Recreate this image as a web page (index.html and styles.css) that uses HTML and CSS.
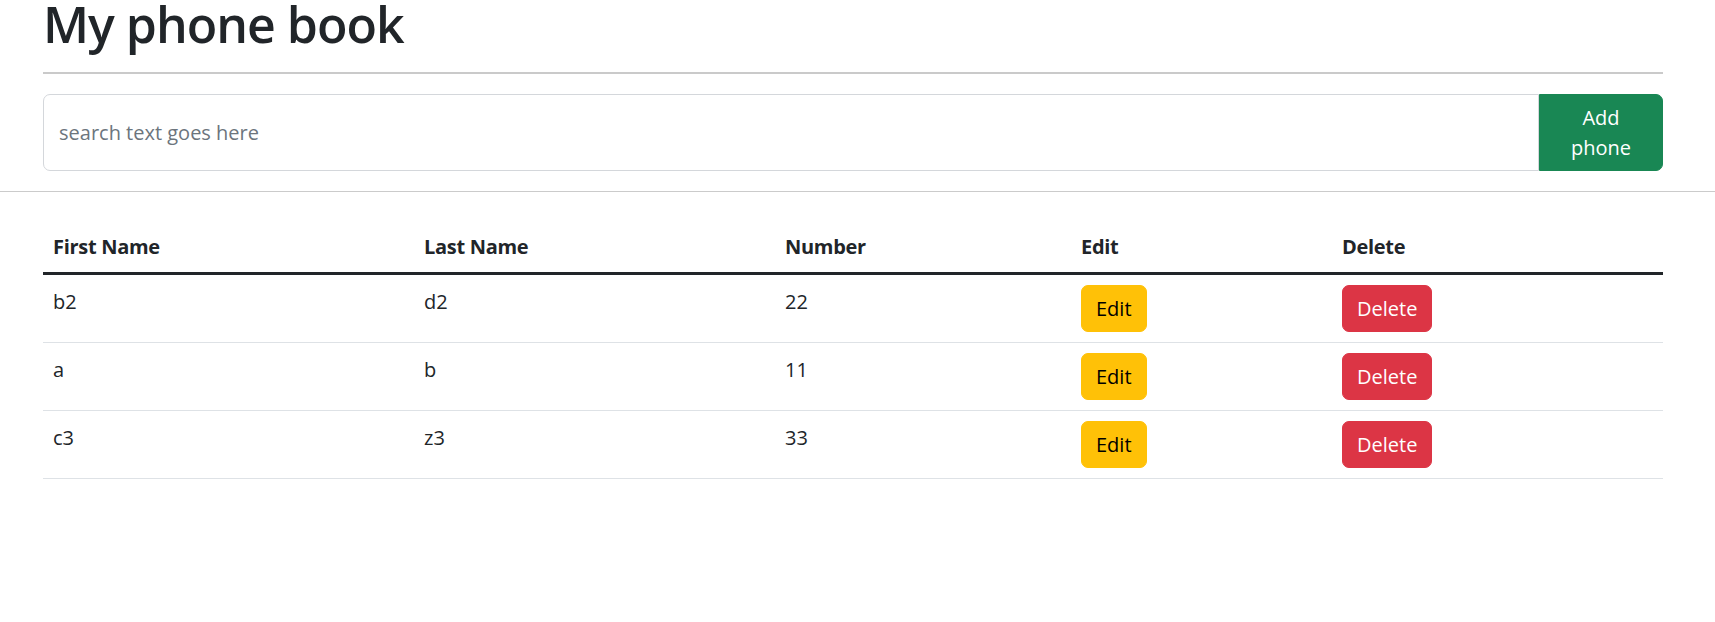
FILE: index.html
```html
<!DOCTYPE html>
<html lang="en">
<head>
<meta charset="utf-8">
<title>My phone book</title>
<link rel="stylesheet" href="styles.css">
</head>
<body>
<header class="top">
  <h1 class="title">My phone book</h1>
  <hr class="rule">
  <div class="search-group">
    <input class="search-input" type="text" placeholder="search text goes here">
    <button class="btn btn-add" type="button">Add phone</button>
  </div>
</header>
<main class="content">
  <table class="phones">
    <colgroup>
      <col class="c-first">
      <col class="c-last">
      <col class="c-num">
      <col class="c-edit">
      <col class="c-del">
    </colgroup>
    <thead>
      <tr><th>First Name</th><th>Last Name</th><th>Number</th><th>Edit</th><th>Delete</th></tr>
    </thead>
    <tbody>
      <tr><td>b2</td><td>d2</td><td>22</td><td><button class="btn btn-edit">Edit</button></td><td><button class="btn btn-del">Delete</button></td></tr>
      <tr><td>a</td><td>b</td><td>11</td><td><button class="btn btn-edit">Edit</button></td><td><button class="btn btn-del">Delete</button></td></tr>
      <tr><td>c3</td><td>z3</td><td>33</td><td><button class="btn btn-edit">Edit</button></td><td><button class="btn btn-del">Delete</button></td></tr>
    </tbody>
  </table>
</main>
</body>
</html>
```
FILE: styles.css
```css
* { box-sizing: border-box; }
html, body {
  margin: 0;
  padding: 0;
  background: #fff;
  color: #212529;
  font-family: "Open Sans", "Noto Sans", sans-serif;
  font-size: 20px;
  line-height: 30px;
}
.top {
  padding: 0 52px 20px 43px;
  border-bottom: 1px solid #cbcbcb;
}
.title {
  margin: 0 0 24px;
  font-size: 50px;
  line-height: 48px;
  font-weight: 600;
  letter-spacing: -1px;
}
.rule {
  margin: 0;
  border: 0;
  border-top: 2px solid #cacaca;
  height: 0;
}
.search-group {
  margin-top: 20px;
  display: flex;
  align-items: stretch;
}
.search-input {
  flex: 1;
  min-width: 0;
  border: 1px solid #d4d7db;
  border-radius: 7px 0 0 7px;
  padding: 0 15px;
  font-family: inherit;
  font-size: 20px;
  color: #212529;
  outline: none;
}
.search-input::placeholder { color: #6c757d; }
.btn {
  font-family: inherit;
  font-size: 20px;
  line-height: 30px;
  border: 1px solid transparent;
  border-radius: 7px;
  padding: 7.5px 15px;
  cursor: pointer;
}
.btn-add {
  width: 124px;
  background: #198754;
  border-color: #198754;
  color: #fff;
  border-radius: 0 7px 7px 0;
  text-align: center;
}
.btn-edit {
  background: #ffc107;
  border-color: #ffc107;
  color: #000;
  padding: 7.5px 14px;
}
.btn-del {
  background: #dc3545;
  border-color: #dc3545;
  color: #fff;
  padding: 7.5px 14px;
}
.content {
  padding: 30px 52px 0 43px;
}
.phones {
  width: 100%;
  border-collapse: collapse;
  table-layout: fixed;
}
.c-first { width: 371px; }
.c-last { width: 361px; }
.c-num { width: 296px; }
.c-edit { width: 261px; }
.c-del { width: auto; }
.phones th {
  text-align: left;
  font-weight: 700;
  padding: 8px 10px;
  line-height: 34px;
  border-bottom: 3px solid #212529;
  letter-spacing: -0.3px;
}
.phones td {
  padding: 10px;
  line-height: 34px;
  vertical-align: top;
  border-bottom: 1px solid #dee2e6;
}
.phones td .btn { display: inline-block; vertical-align: top; }
```
